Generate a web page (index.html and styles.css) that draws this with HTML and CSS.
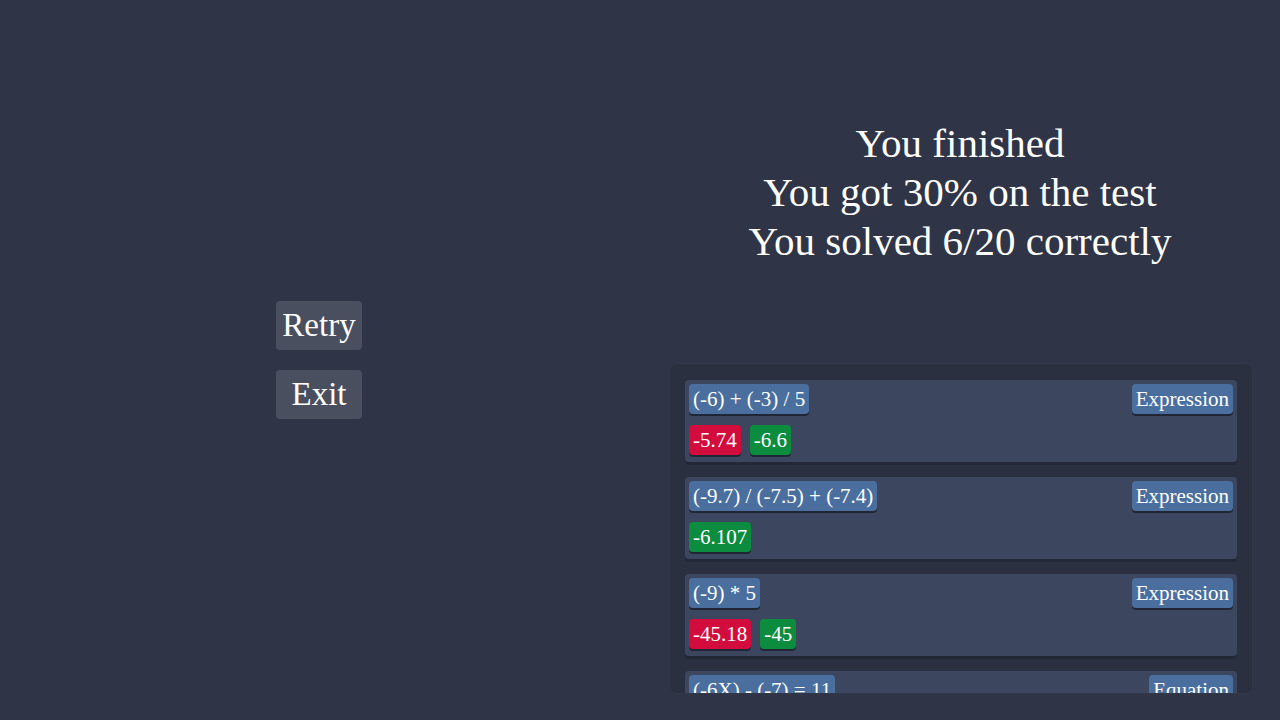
FILE: index.html
```html
<!DOCTYPE html>
<html>
<head>
<meta charset="utf-8">
<link rel="stylesheet" href="styles.css">
</head>
<body>
<div class="page">
  <div class="left">
    <button class="btn">Retry</button>
    <button class="btn">Exit</button>
  </div>
  <div class="right">
    <div class="summary">
      <div>You finished</div>
      <div>You got 30% on the test</div>
      <div>You solved 6/20 correctly</div>
    </div>
    <div class="panel">
      <div class="card">
        <div class="row top"><span class="chip blue">(-6) + (-3) / 5</span><span class="chip blue">Expression</span></div>
        <div class="row"><span class="chip red">-5.74</span><span class="chip green">-6.6</span></div>
      </div>
      <div class="card">
        <div class="row top"><span class="chip blue">(-9.7) / (-7.5) + (-7.4)</span><span class="chip blue">Expression</span></div>
        <div class="row"><span class="chip green">-6.107</span></div>
      </div>
      <div class="card">
        <div class="row top"><span class="chip blue">(-9) * 5</span><span class="chip blue">Expression</span></div>
        <div class="row"><span class="chip red">-45.18</span><span class="chip green">-45</span></div>
      </div>
      <div class="card">
        <div class="row top"><span class="chip blue">(-6X) - (-7) = 11</span><span class="chip blue">Equation</span></div>
        <div class="row"><span class="chip green">-0.667</span></div>
      </div>
    </div>
  </div>
</div>
</body>
</html>
```
FILE: styles.css
```css
html, body {
  margin: 0;
  padding: 0;
  background: #2f3546;
  color: #ffffff;
  font-family: "Liberation Serif", "DejaVu Serif", serif;
}
.page {
  display: flex;
  width: 1280px;
  height: 720px;
}
.left {
  width: 638px;
  margin-right: 2px;
  display: flex;
  flex-direction: column;
  align-items: center;
  justify-content: center;
  gap: 20px;
}
.btn {
  width: 86px;
  height: 49px;
  border: none;
  border-radius: 4px;
  background: #4a4f60;
  color: #ffffff;
  font-family: "Liberation Serif", "DejaVu Serif", serif;
  font-size: 33px;
  padding: 0;
  margin: 0;
}
.right {
  width: 640px;
  display: flex;
  flex-direction: column;
}
.summary {
  margin-top: 119px;
  text-align: center;
  font-size: 41px;
  line-height: 49px;
}
.panel {
  margin: 97px 27px 0 29px;
  height: 331px;
  box-sizing: border-box;
  padding: 16px 15px 0 15px;
  background: #2a303f;
  border: 1px solid #323848;
  border-radius: 8px;
  overflow: hidden;
  display: flex;
  flex-direction: column;
  gap: 15px;
}
.card {
  flex: none;
  height: 82px;
  box-sizing: border-box;
  padding: 4px 4px 7px 4px;
  background: #3c465e;
  border-radius: 4px;
  box-shadow: 0 3px 0 #232836;
  display: flex;
  flex-direction: column;
  gap: 11px;
}
.row {
  display: flex;
  gap: 9px;
}
.row.top {
  justify-content: space-between;
}
.chip {
  height: 30px;
  line-height: 31px;
  padding: 0 4px;
  border-radius: 4px;
  font-size: 21px;
  color: #ffffff;
  box-shadow: 0 2px 0 rgba(20, 24, 34, 0.7);
  white-space: nowrap;
}
.blue { background: #4a6f9e; }
.red { background: #d20c3c; }
.green { background: #0c8c3f; }
```
